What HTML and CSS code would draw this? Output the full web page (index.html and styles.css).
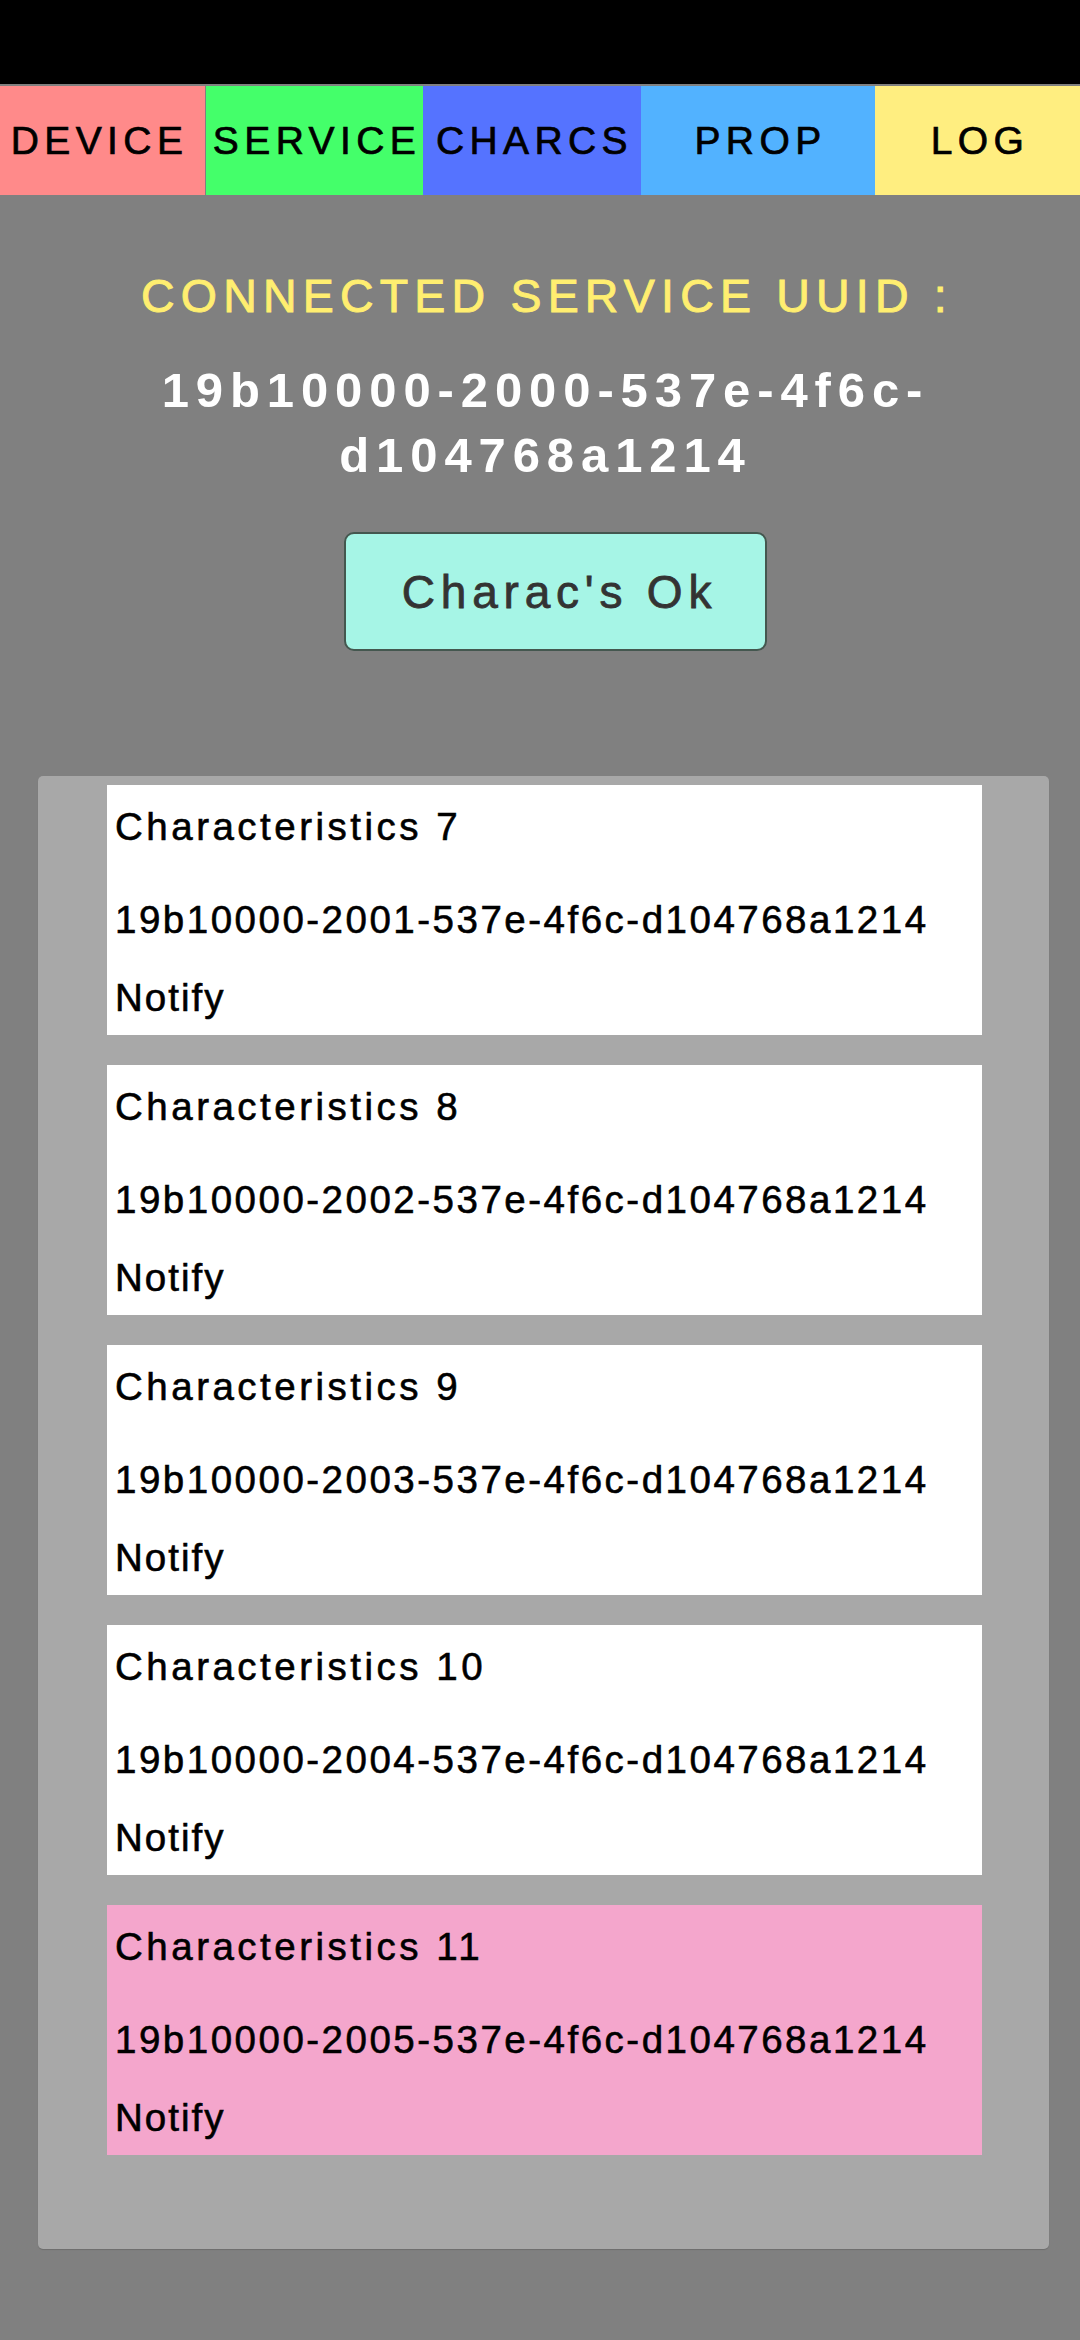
FILE: index.html
```html
<!DOCTYPE html>
<html lang="en">
<head>
<meta charset="utf-8">
<title>Characteristics</title>
<link rel="stylesheet" href="styles.css">
</head>
<body>
<div class="status"></div>
<nav class="tabs">
  <div class="tab tab-device">DEVICE</div>
  <div class="tab tab-service">SERVICE</div>
  <div class="tab tab-charcs">CHARCS</div>
  <div class="tab tab-prop">PROP</div>
  <div class="tab tab-log">LOG</div>
</nav>
<main>
  <h1 class="title">CONNECTED SERVICE UUID :</h1>
  <p class="uuid">19b10000-2000-537e-4f6c-d104768a1214</p>
  <div class="btn-row"><button class="btn">Charac's Ok</button></div>
  <section class="panel">
    <div class="card">
      <div class="c-title">Characteristics 7</div>
      <div class="c-uuid">19b10000-2001-537e-4f6c-d104768a1214</div>
      <div class="c-prop">Notify</div>
    </div>
    <div class="card">
      <div class="c-title">Characteristics 8</div>
      <div class="c-uuid">19b10000-2002-537e-4f6c-d104768a1214</div>
      <div class="c-prop">Notify</div>
    </div>
    <div class="card">
      <div class="c-title">Characteristics 9</div>
      <div class="c-uuid">19b10000-2003-537e-4f6c-d104768a1214</div>
      <div class="c-prop">Notify</div>
    </div>
    <div class="card">
      <div class="c-title">Characteristics 10</div>
      <div class="c-uuid">19b10000-2004-537e-4f6c-d104768a1214</div>
      <div class="c-prop">Notify</div>
    </div>
    <div class="card card-selected">
      <div class="c-title">Characteristics 11</div>
      <div class="c-uuid">19b10000-2005-537e-4f6c-d104768a1214</div>
      <div class="c-prop">Notify</div>
    </div>
  </section>
</main>
</body>
</html>
```
FILE: styles.css
```css
html, body {
  margin: 0;
  padding: 0;
}
body {
  width: 1080px;
  height: 2340px;
  background: #808080;
  font-family: "Liberation Sans", Arial, sans-serif;
  overflow: hidden;
}
.status {
  height: 84px;
  background: #000;
  margin-bottom: 2px;
}
.tabs {
  display: grid;
  grid-template-columns: 206px 217px 218px 234px 205px;
  height: 109px;
}
.tab {
  display: flex;
  align-items: center;
  justify-content: center;
  font-size: 39px;
  letter-spacing: 5.4px;
  color: #000;
  white-space: nowrap;
  overflow: hidden;
  -webkit-text-stroke: 0.7px currentColor;
}
.tab-device { background: #FF8A8A; border-right: 1px solid #808080; padding-right: 6px; }
.tab-service { background: #44FF6A; padding-left: 5px; }
.tab-charcs { background: #5573FF; padding-left: 5px; }
.tab-prop { background: #52B2FF; padding-left: 5px; }
.tab-log { background: #FFEE80; padding-left: 5px; }

.title {
  margin: 73px 0 0;
  padding-left: 14px;
  font-size: 46.5px;
  font-weight: normal;
  line-height: 56px;
  letter-spacing: 6.2px;
  color: #FFEE70;
  text-align: center;
  white-space: nowrap;
  -webkit-text-stroke: 0.9px currentColor;
}
.uuid {
  box-sizing: border-box;
  width: 880px;
  margin: 34px auto 0;
  padding-left: 11px;
  font-size: 49px;
  font-weight: bold;
  line-height: 65px;
  letter-spacing: 6.9px;
  color: #fff;
  text-align: center;
}
.btn-row {
  display: flex;
  justify-content: center;
  padding-left: 31px;
  margin-top: 44px;
}
.btn {
  box-sizing: border-box;
  width: 423px;
  height: 119px;
  padding: 0 0 0 8px;
  background: #A6F5E6;
  border: 2px solid #44574f;
  border-radius: 10px;
  font-family: inherit;
  font-size: 46px;
  letter-spacing: 5.8px;
  color: #333;
  -webkit-text-stroke: 0.8px currentColor;
}
.panel {
  box-sizing: border-box;
  margin: 125px 0 0 38px;
  width: 1011px;
  padding: 9px 67px 94px 69px;
  background: #A8A8A8;
  border-radius: 5px;
  box-shadow: 0 1px 1px rgba(0,0,0,0.15);
  display: flex;
  flex-direction: column;
  gap: 30px;
}
.card {
  box-sizing: border-box;
  height: 250px;
  padding: 17px 0 0 8px;
  background: #fff;
  color: #000;
  font-size: 38.5px;
  white-space: nowrap;
  -webkit-text-stroke: 0.6px currentColor;
}
.card-selected { background: #F4A6CC; }
.c-title { line-height: 50px; letter-spacing: 3.5px; }
.c-uuid { line-height: 50px; margin-top: 43px; letter-spacing: 2.5px; }
.c-prop { line-height: 50px; margin-top: 28px; letter-spacing: 2px; }
```
